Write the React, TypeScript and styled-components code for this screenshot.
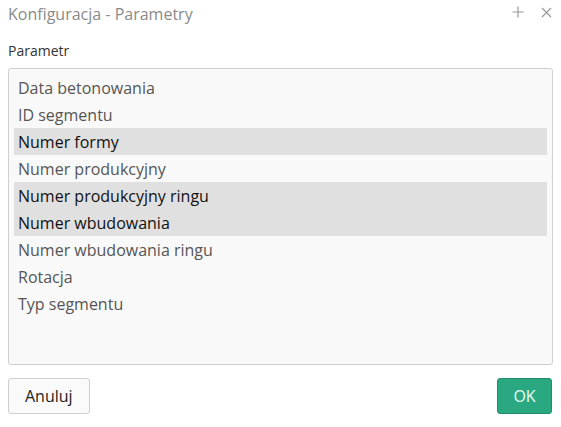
import React from "react";
import styled, {createGlobalStyle} from "styled-components";

const GlobalStyle = createGlobalStyle`
  html, body {
    margin: 0;
    padding: 0;
    background: #fff;
    font-family: "Open Sans", "Liberation Sans", sans-serif;
  }
`;

const params = [
  {name: "Data betonowania", selected: false},
  {name: "ID segmentu", selected: false},
  {name: "Numer formy", selected: true},
  {name: "Numer produkcyjny", selected: false},
  {name: "Numer produkcyjny ringu", selected: true},
  {name: "Numer wbudowania", selected: true},
  {name: "Numer wbudowania ringu", selected: false},
  {name: "Rotacja", selected: false},
  {name: "Typ segmentu", selected: false},
];

const App = () => {
  return (
    <Dialog>
      <GlobalStyle/>
      <Header>
        <Title>Konfiguracja - Parametry</Title>
        <Tools>
          <ToolButton aria-label="maximize">
            <svg width="12" height="12" viewBox="0 0 12 12">
              <path d="M6 0.5v11M0.5 6h11" stroke="#999" strokeWidth="1.2" fill="none"/>
            </svg>
          </ToolButton>
          <ToolButton aria-label="close">
            <svg width="11" height="11" viewBox="0 0 11 11">
              <path d="M1 1l9 9M10 1l-9 9" stroke="#999" strokeWidth="1.2" fill="none"/>
            </svg>
          </ToolButton>
        </Tools>
      </Header>
      <Label>Parametr</Label>
      <List>
        {params.map(p => (
          <Row key={p.name} selected={p.selected}>{p.name}</Row>
        ))}
      </List>
      <Footer>
        <Button>Anuluj</Button>
        <Button primary>OK</Button>
      </Footer>
    </Dialog>
  )
}

export default App;


const Dialog = styled.div`
  width: 561px;
  height: 427px;
  box-sizing: border-box;
  padding: 0 8px;
  display: flex;
  flex-direction: column;
`

const Header = styled.div`
  height: 28px;
  display: flex;
  align-items: center;
  justify-content: space-between;
`

const Title = styled.div`
  font-size: 16px;
  color: #8a8a8a;
  margin-top: -1px;
`

const Tools = styled.div`
  display: flex;
  align-items: center;
  gap: 16px;
  margin-right: 1px;
  margin-top: -4px;
`

const ToolButton = styled.span`
  display: flex;
  align-items: center;
  justify-content: center;
  width: 12px;
  height: 12px;
  cursor: pointer;
`

const Label = styled.div`
  margin-top: 14px;
  font-size: 14px;
  line-height: 18px;
  color: #333;
`

const List = styled.div`
  margin-top: 8px;
  height: 297px;
  box-sizing: border-box;
  border: 1px solid #cfcfcf;
  border-radius: 3px;
  background: #f9f9f9;
  padding: 5px 5px;
`

const Row = styled.div<{selected?: boolean}>`
  height: 27px;
  line-height: 29px;
  overflow: hidden;
  padding-left: 4px;
  font-size: 16px;
  color: ${({selected}) => selected ? "#111" : "#555"};
  background: ${({selected}) => selected ? "#e0e0e0" : "transparent"};
  cursor: pointer;
`

const Footer = styled.div`
  margin-top: 13px;
  display: flex;
  justify-content: space-between;
  margin-right: 1px;
`

const Button = styled.button<{primary?: boolean}>`
  height: 36px;
  padding: ${({primary}) => primary ? "0 15px" : "0 16px"};
  min-width: 55px;
  box-sizing: border-box;
  font-family: "Open Sans", "Liberation Sans", sans-serif;
  font-size: 16px;
  border-radius: 3px;
  cursor: pointer;
  border: 1px solid ${({primary}) => primary ? "#1f8f6c" : "#cfcfcf"};
  background: ${({primary}) => primary ? "#2aa882" : "#fafafa"};
  color: ${({primary}) => primary ? "#e8fff6" : "#222"};
`
